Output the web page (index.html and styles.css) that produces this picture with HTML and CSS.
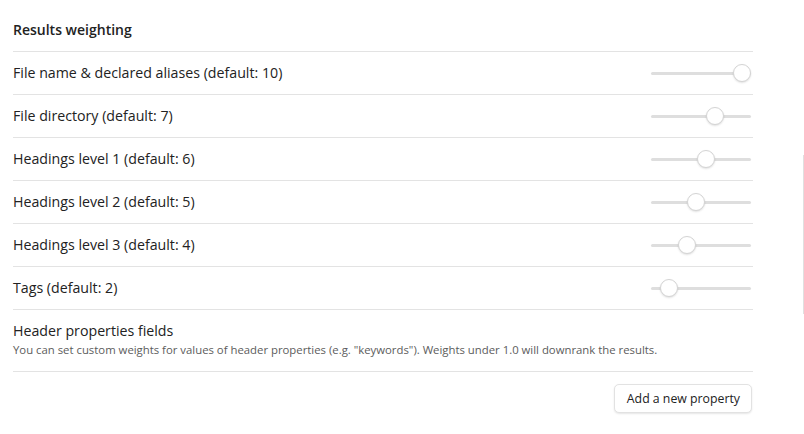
FILE: index.html
```html
<!DOCTYPE html>
<html lang="en">
<head>
  <meta charset="UTF-8" />
  <meta name="viewport" content="width=device-width, initial-scale=1.0"/>
  <title>Results weighting</title>
  <link rel="stylesheet" href="styles.css">
</head>
<body>

<div class="container">
  <div class="heading">Results weighting</div>

  <div class="setting-item">
    <div class="info">
      <div class="name">File name &amp; declared aliases (default: 10)</div>
    </div>
    <input type="range" class="slider" min="1" max="10" value="10">
  </div>

  <div class="setting-item">
    <div class="info">
      <div class="name">File directory (default: 7)</div>
    </div>
    <input type="range" class="slider" min="1" max="10" value="7">
  </div>

  <div class="setting-item">
    <div class="info">
      <div class="name">Headings level 1 (default: 6)</div>
    </div>
    <input type="range" class="slider" min="1" max="10" value="6">
  </div>

  <div class="setting-item">
    <div class="info">
      <div class="name">Headings level 2 (default: 5)</div>
    </div>
    <input type="range" class="slider" min="1" max="10" value="5">
  </div>

  <div class="setting-item">
    <div class="info">
      <div class="name">Headings level 3 (default: 4)</div>
    </div>
    <input type="range" class="slider" min="1" max="10" value="4">
  </div>

  <div class="setting-item">
    <div class="info">
      <div class="name">Tags (default: 2)</div>
    </div>
    <input type="range" class="slider" min="1" max="10" value="2">
  </div>

  <div class="setting-item tall">
    <div class="info">
      <div class="name">Header properties fields</div>
      <div class="desc">You can set custom weights for values of header properties (e.g. "keywords"). Weights under 1.0 will downrank the results.</div>
    </div>
  </div>

  <div class="setting-item actions">
    <button class="btn">Add a new property</button>
  </div>
</div>

<div class="scroll-edge"></div>

</body>
</html>
```

FILE: styles.css
```css
body {
  font-family: "Open Sans", "Noto Sans", sans-serif;
  background: #fff;
  color: #222;
  margin: 0;
}
.container {
  padding: 20px 51px 0 13px;
}
.heading {
  font-size: 14px;
  font-weight: 600;
  line-height: 20px;
  padding-bottom: 11px;
}
.setting-item {
  display: flex;
  align-items: center;
  border-top: 1px solid #e3e3e3;
  padding: 11px 0;
}
.setting-item.tall {
  padding-bottom: 12px;
}
.info {
  flex: 1;
}
.name {
  font-size: 14.2px;
  line-height: 20px;
}
.desc {
  font-size: 11.35px;
  line-height: 18px;
  color: #5c5c5c;
}
.actions {
  justify-content: flex-end;
  padding-top: 12px;
}
.slider {
  -webkit-appearance: none;
  appearance: none;
  width: 100px;
  height: 18px;
  margin: 0 2px 0 0;
  background: transparent;
}
.slider::-webkit-slider-runnable-track {
  height: 3px;
  background: #dedede;
  border-radius: 2px;
}
.slider::-webkit-slider-thumb {
  -webkit-appearance: none;
  width: 18px;
  height: 18px;
  margin-top: -7.5px;
  border-radius: 50%;
  background: #fff;
  border: 1px solid #d4d4d4;
  box-sizing: border-box;
  box-shadow: 0 1px 2px rgba(0,0,0,0.12);
}
.btn {
  font-family: inherit;
  font-size: 12.3px;
  color: #222;
  background: #fff;
  border: 1px solid #e2e2e2;
  border-radius: 5px;
  height: 29px;
  padding: 0 11px 0 12px;
  box-shadow: 0 1px 2px rgba(0,0,0,0.1);
  margin-right: 1px;
}
.scroll-edge {
  position: absolute;
  top: 155px;
  right: 0;
  width: 1px;
  height: 159px;
  background: #e0e0e0;
}
```
